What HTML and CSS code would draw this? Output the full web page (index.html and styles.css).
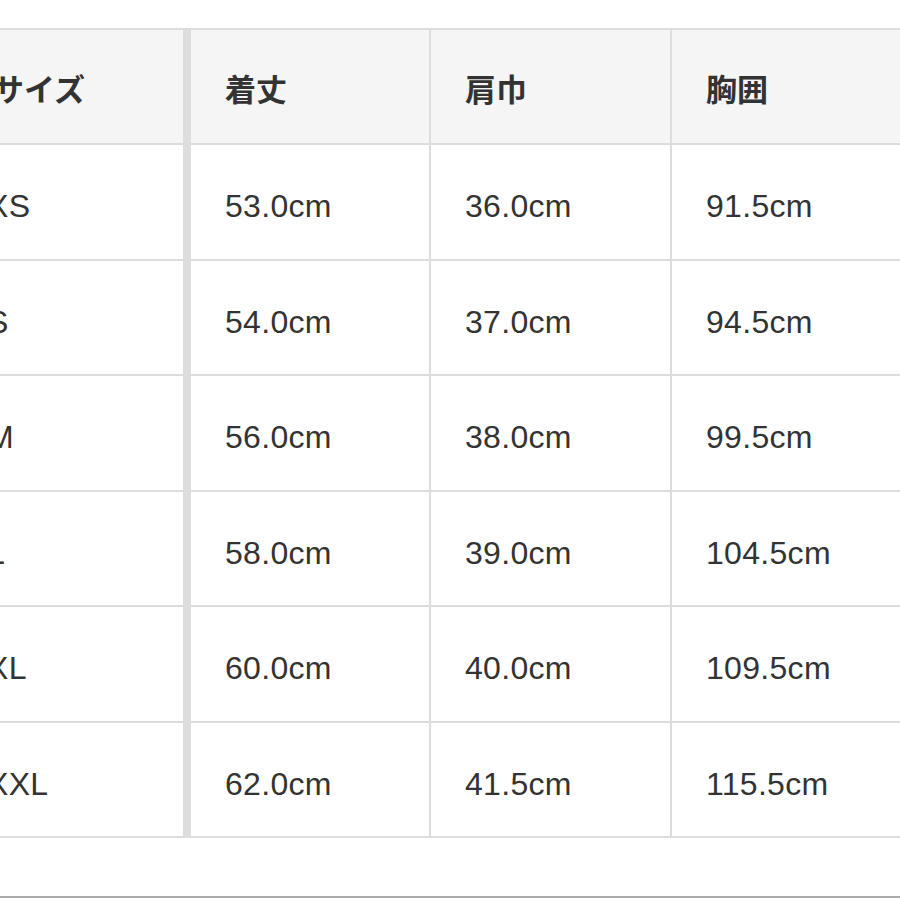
FILE: index.html
```html
<!DOCTYPE html>
<html lang="ja">
<head>
<meta charset="utf-8">
<title>サイズ表</title>
<link rel="stylesheet" href="styles.css">
</head>
<body>
<div class="page">
  <div class="sheet">
    <div class="cell head first">サイズ</div>
    <div class="cell head">着丈</div>
    <div class="cell head">肩巾</div>
    <div class="cell head">胸囲</div>

    <div class="cell first">XS</div>
    <div class="cell">53.0cm</div>
    <div class="cell">36.0cm</div>
    <div class="cell">91.5cm</div>

    <div class="cell first">S</div>
    <div class="cell">54.0cm</div>
    <div class="cell">37.0cm</div>
    <div class="cell">94.5cm</div>

    <div class="cell first">M</div>
    <div class="cell">56.0cm</div>
    <div class="cell">38.0cm</div>
    <div class="cell">99.5cm</div>

    <div class="cell first">L</div>
    <div class="cell">58.0cm</div>
    <div class="cell">39.0cm</div>
    <div class="cell">104.5cm</div>

    <div class="cell first">XL</div>
    <div class="cell">60.0cm</div>
    <div class="cell">40.0cm</div>
    <div class="cell">109.5cm</div>

    <div class="cell first">XXL</div>
    <div class="cell">62.0cm</div>
    <div class="cell">41.5cm</div>
    <div class="cell">115.5cm</div>
  </div>
  <div class="rule"></div>
</div>
</body>
</html>
```

FILE: styles.css
```css
html, body {
  margin: 0;
  padding: 0;
  background: #ffffff;
}

.page {
  width: 900px;
  height: 900px;
  overflow: hidden;
  padding-top: 28px;
  box-sizing: border-box;
  font-family: "Liberation Sans", "Noto Sans CJK JP", sans-serif;
  color: #333333;
}

.sheet {
  display: grid;
  grid-template-columns: 233px 238px 239px 260px;
  grid-template-rows: 113px repeat(6, 113.5px);
  gap: 2px;
  padding: 2px 0;
  margin-left: -44px;
  width: 980px;
  background: #dddddd;
}

.cell {
  display: flex;
  align-items: center;
  box-sizing: border-box;
  padding: 10px 0 0 34px;
  background: #ffffff;
  font-size: 32px;
  letter-spacing: 0.3px;
  white-space: nowrap;
}

.cell.first {
  border-right: 6px solid #dddddd;
  padding-left: 31px;
}

.cell.head {
  background: #f5f5f5;
  font-family: "Noto Sans CJK JP", "Liberation Sans", sans-serif;
  font-weight: 700;
  font-size: 31px;
  letter-spacing: 0;
  padding: 2px 0 0 34px;
}

.cell.head.first {
  padding-left: 37px;
}

.rule {
  margin-top: 58px;
  height: 2px;
  background: #aaaaaa;
}
```
